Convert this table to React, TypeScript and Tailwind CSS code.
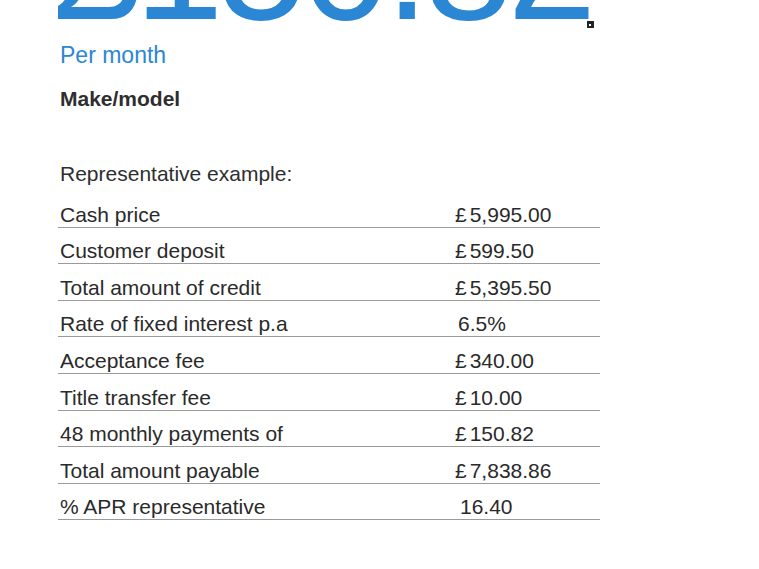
const rows = [
  { label: "Cash price", value: "5,995.00", pound: true, indent: "" },
  { label: "Customer deposit", value: "599.50", pound: true, indent: "" },
  { label: "Total amount of credit", value: "5,395.50", pound: true, indent: "" },
  { label: "Rate of fixed interest p.a", value: "6.5%", pound: false, indent: "pl-[3px]" },
  { label: "Acceptance fee", value: "340.00", pound: true, indent: "" },
  { label: "Title transfer fee", value: "10.00", pound: true, indent: "" },
  { label: "48 monthly payments of", value: "150.82", pound: true, indent: "" },
  { label: "Total amount payable", value: "7,838.86", pound: true, indent: "" },
  { label: "% APR representative", value: "16.40", pound: false, indent: "pl-[5px]" },
];

export default function App() {
  return (
    <div className="h-[569px] w-[759px] overflow-hidden bg-white font-['Liberation_Sans',Arial,sans-serif]">
      <div className="pl-[58px]">
        {/* headline amount, mostly cut off by the top of the scan */}
        <div className="flex h-[29px] items-start overflow-hidden">
          <div className="ml-[-7px] mt-[-116px] text-[160px] leading-none tracking-[-5.5px] text-[#2b87d3]">
            £150.82
          </div>
          <div className="ml-[-4px] mt-[21px] flex h-[7px] w-[7px] shrink-0 items-center justify-center bg-[#222]">
            <div className="h-[2px] w-[2px] bg-white" />
          </div>
        </div>

        <div className="mt-[13px] pl-[2px] text-[23px] leading-[26px] text-[#2b87d3]">Per month</div>
        <div className="mt-[19px] pl-[2px] text-[21px] font-bold leading-[24px] text-[#2e2e2e]">Make/model</div>

        <div className="mt-[51px] pl-[2px] text-[21px] leading-[24px] text-[#2e2e2e]">Representative example:</div>

        <div className="mt-[5px] w-[542px] text-[21px] leading-[24px] text-[#2a2a2a]">
          {rows.map((r) => (
            <div key={r.label} className="flex h-[36.6px] items-end border-b-[1.5px] border-[#9a9a9a]">
              <div className="w-[397px] pl-[2px]">{r.label}</div>
              <div className={r.indent}>
                {r.pound && <span className="mr-[3px]">£</span>}
                {r.value}
              </div>
            </div>
          ))}
        </div>
      </div>
    </div>
  );
}
